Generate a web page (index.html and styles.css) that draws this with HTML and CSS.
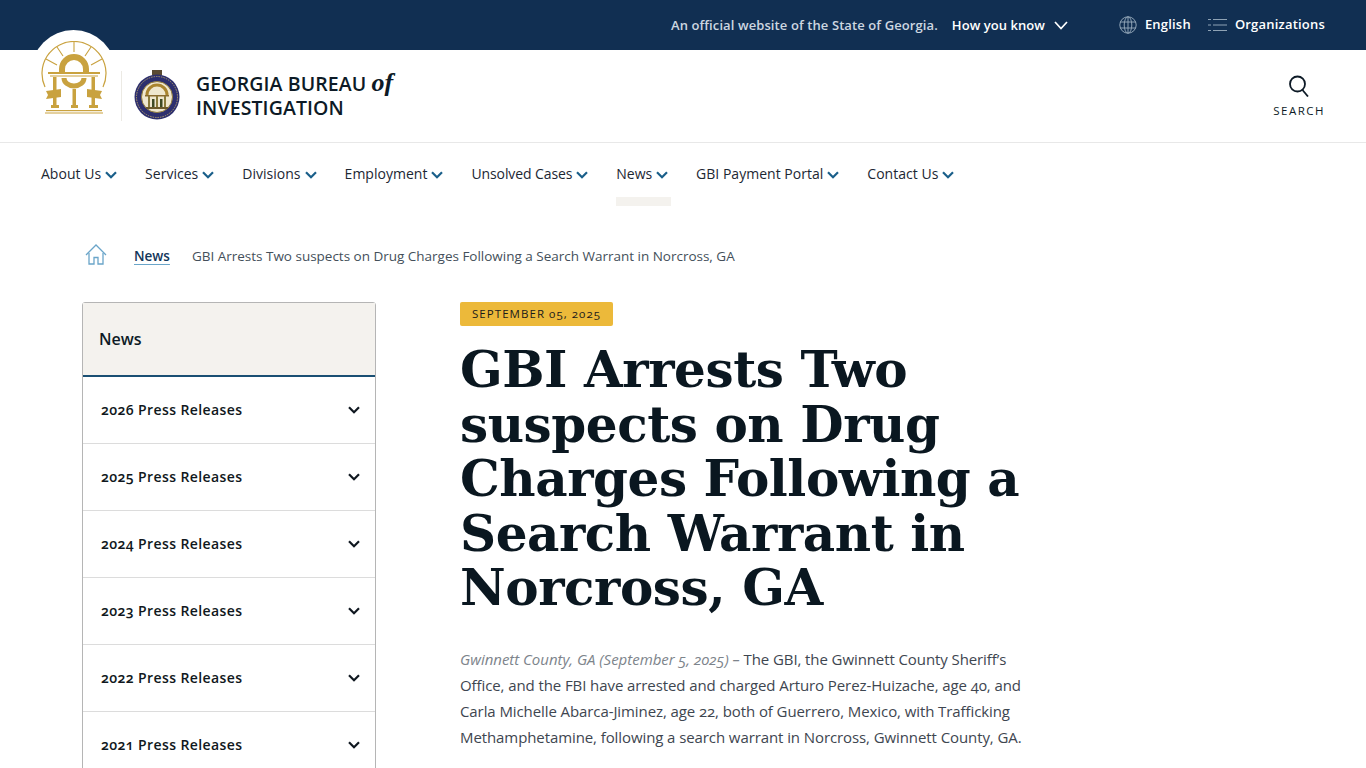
FILE: index.html
```html
<!DOCTYPE html>
<html lang="en">
<head>
<meta charset="utf-8">
<title>GBI Arrests Two suspects on Drug Charges Following a Search Warrant in Norcross, GA</title>
<link rel="stylesheet" href="styles.css">
</head>
<body>
<div class="topbar">
  <span class="official">An official website of the State of Georgia.</span>
  <span class="know">How you know</span>
  <svg class="know-chev" width="14" height="9" viewBox="0 0 14 9"><path d="M1 1l6 6.500L13 1" fill="none" stroke="#fff" stroke-width="1.700"/></svg>
  <svg class="globe" width="18" height="18" viewBox="0 0 18 18" fill="none" stroke="#8fa3b5" stroke-width="1"><circle cx="9" cy="9" r="8.200"/><ellipse cx="9" cy="9" rx="3.800" ry="8.200"/><path d="M9 .8v16.400M1 6h16M1 12h16"/></svg>
  <span class="tool">English</span>
  <svg class="orgs" width="19" height="14" viewBox="0 0 19 14" fill="none" stroke="#8fa3b5" stroke-width="1"><path d="M5 1.500h14M5 7h14M5 12.500h14M0 1.500h3M0 7h3M0 12.500h3"/></svg>
  <span class="tool">Organizations</span>
</div>

<header class="masthead">
  <a class="seal-tab" href="#" aria-label="Georgia">
    <svg width="66" height="74" viewBox="0 0 66 74">
      <g fill="none" stroke="#c9a23f">
        <path d="M4 46A32 32 0 1 1 62 46" stroke-width="1.200"/>
        <path d="M33 1v10M16 6l6 9M50 6l-6 9M5 18l11 6M61 18l-11 6" stroke-width="1.100"/>
        <path d="M21 31v-3a12 12 0 0 1 24 0v3" stroke-width="6"/>
        <path d="M23 37a10 8 0 0 0 20 0" stroke-width="5"/>
      </g>
      <g fill="#c9a23f">
        <rect x="7" y="31" width="52" height="2"/>
        <rect x="9" y="34.500" width="48" height="1"/>
        <rect x="12" y="36" width="3.500" height="28"/>
        <rect x="31.500" y="48" width="3.500" height="16"/>
        <rect x="50.500" y="36" width="3.500" height="28"/>
        <path d="M5 50l15-2v8l-15 2 2-4zM61 50l-15-2v8l15 2-2-4z"/>
        <rect x="10" y="64" width="8" height="3"/>
        <rect x="30" y="64" width="7" height="3"/>
        <rect x="48" y="64" width="9" height="3"/>
        <rect x="5" y="69" width="56" height="1.200"/>
        <rect x="4" y="71.500" width="58" height="1"/>
      </g>
    </svg>
  </a>
  <div class="brand">
    <svg class="gbi-seal" width="46" height="50" viewBox="0 0 46 50">
      <path d="M18 0h10v5H18z" fill="#5a4a32"/>
      <circle cx="23" cy="27" r="22.500" fill="#2d2f6e"/>
      <circle cx="23" cy="27" r="20.500" fill="none" stroke="#c9b36a" stroke-width=".8" stroke-dasharray="1.500 1"/>
      <circle cx="23" cy="27" r="15.500" fill="#efe7cf" stroke="#8f7a3c"/>
      <path d="M13 25a10 10 0 0 1 20 0" fill="none" stroke="#a9842f" stroke-width="3"/>
      <path d="M11 25h24v1.500H11z" fill="#8a6b2f"/>
      <path d="M14 26h2v11h-2zM22 26h2v11h-2zM30 26h2v11h-2z" fill="#8a7a3a"/>
      <path d="M18 29h2.500v8H18zM26 29h2.500v8H26z" fill="#3e4a25"/>
      <path d="M12 37h22v2H12z" fill="#6c5a2b"/>
    </svg>
    <div class="agency">GEORGIA BUREAU <em>of</em><br>INVESTIGATION</div>
  </div>
  <a class="search" href="#">
    <svg width="22" height="22" viewBox="0 0 22 22" fill="none" stroke="#0d1a26" stroke-width="1.800"><circle cx="9.500" cy="9" r="7.500"/><path d="M14.500 15l5.500 6.500"/></svg>
    <span>SEARCH</span>
  </a>
</header>

<nav class="mainnav">
  <a class="navitem" href="#"><span>About Us</span><svg class="nchev" viewBox="0 0 12 8"><path d="M1 1.200l5 5 5-5" /></svg></a>
  <a class="navitem" href="#"><span>Services</span><svg class="nchev" viewBox="0 0 12 8"><path d="M1 1.200l5 5 5-5" /></svg></a>
  <a class="navitem" href="#"><span>Divisions</span><svg class="nchev" viewBox="0 0 12 8"><path d="M1 1.200l5 5 5-5" /></svg></a>
  <a class="navitem" href="#"><span>Employment</span><svg class="nchev" viewBox="0 0 12 8"><path d="M1 1.200l5 5 5-5" /></svg></a>
  <a class="navitem tight" href="#"><span>Unsolved Cases</span><svg class="nchev" viewBox="0 0 12 8"><path d="M1 1.200l5 5 5-5" /></svg></a>
  <a class="navitem active" href="#"><span>News</span><svg class="nchev" viewBox="0 0 12 8"><path d="M1 1.200l5 5 5-5" /></svg></a>
  <a class="navitem" href="#"><span>GBI Payment Portal</span><svg class="nchev" viewBox="0 0 12 8"><path d="M1 1.200l5 5 5-5" /></svg></a>
  <a class="navitem" href="#"><span>Contact Us</span><svg class="nchev" viewBox="0 0 12 8"><path d="M1 1.200l5 5 5-5" /></svg></a>
</nav>

<div class="crumbs">
  <svg class="home" width="22" height="21" viewBox="0 0 22 21" fill="none" stroke="#6aa5c9" stroke-width="1.300"><path d="M1 11L11 1l10 10"/><path d="M4 9v11h5v-6.500h4V20h5V9"/></svg>
  <a class="crumb-link" href="#">News</a>
  <span class="crumb-current">GBI Arrests Two suspects on Drug Charges Following a Search Warrant in Norcross, GA</span>
</div>

<div class="content">
  <aside class="side">
    <div class="side-head">News</div>
    <div class="side-row"><span>2026 Press Releases</span><svg class="schev" viewBox="0 0 12 8"><path d="M1 1.200l5 5 5-5"/></svg></div>
    <div class="side-row"><span>2025 Press Releases</span><svg class="schev" viewBox="0 0 12 8"><path d="M1 1.200l5 5 5-5"/></svg></div>
    <div class="side-row"><span>2024 Press Releases</span><svg class="schev" viewBox="0 0 12 8"><path d="M1 1.200l5 5 5-5"/></svg></div>
    <div class="side-row"><span>2023 Press Releases</span><svg class="schev" viewBox="0 0 12 8"><path d="M1 1.200l5 5 5-5"/></svg></div>
    <div class="side-row"><span>2022 Press Releases</span><svg class="schev" viewBox="0 0 12 8"><path d="M1 1.200l5 5 5-5"/></svg></div>
    <div class="side-row"><span>2021 Press Releases</span><svg class="schev" viewBox="0 0 12 8"><path d="M1 1.200l5 5 5-5"/></svg></div>
  </aside>
  <main class="article">
    <div class="date">SEPTEMBER 05, 2025</div>
    <h1>GBI Arrests Two suspects on Drug Charges Following a Search Warrant in Norcross, GA</h1>
    <p><em>Gwinnett County, GA (September 5, 2025) –</em> The GBI, the Gwinnett County Sheriff’s Office, and the FBI have arrested and charged Arturo Perez-Huizache, age 40, and Carla Michelle Abarca-Jiminez, age 22, both of Guerrero, Mexico, with Trafficking Methamphetamine, following a search warrant in Norcross, Gwinnett County, GA.</p>
  </main>
</div>
</body>
</html>
```
FILE: styles.css
```css
* { box-sizing: border-box; }
html, body { margin: 0; height: 768px; overflow: hidden; background: #fff; }
body { font-family: "Open Sans", "Noto Sans", sans-serif; font-variant-numeric: oldstyle-nums; color: #0d1a26; position: relative; }
a { color: inherit; text-decoration: none; }

.topbar { height: 50px; background: #112f52; color: #fff; display: flex; align-items: center; justify-content: flex-end; padding-right: 41px; font-size: 13px; font-weight: 600; }
.official { color: #cdd7e1; letter-spacing: .1px; margin-right: 14px; }
.know { margin-right: 9px; letter-spacing: .05px; }
.know-chev { margin-right: 51px; }
.globe { margin-right: 8px; }
.tool { letter-spacing: .2px; position: relative; top: -1px; }
.orgs { margin: 0 8px 0 17px; }

.masthead { height: 93px; border-bottom: 1px solid #e8e8e8; display: flex; align-items: center; padding: 0 41px 0 121px; justify-content: space-between; }
.seal-tab { position: absolute; left: 31px; top: 30px; width: 85px; height: 85px; border-radius: 50%; background: #fff; display: flex; justify-content: center; padding-top: 11px; }
.brand { display: flex; align-items: center; height: 50px; border-left: 1px solid #eceae4; padding-left: 12px; gap: 16px; }
.gbi-seal { display: block; margin-top: -3px; }
.agency { font-size: 19.500px; line-height: 24px; font-weight: 600; color: #0d1a26; letter-spacing: .1px; }
.agency em { font-family: "Liberation Serif", serif; font-weight: 700; font-size: 26px; line-height: 20px; }
.search { display: flex; flex-direction: column; align-items: center; gap: 6px; font-size: 11.500px; letter-spacing: 1.500px; }
.search svg { display: block; }

.mainnav { height: 63px; display: flex; gap: 28px; padding-left: 41px; }
.navitem { height: 63px; display: flex; align-items: flex-start; padding-top: 22px; font-size: 14px; line-height: 18px; letter-spacing: .02px; gap: 4px; color: #1c2733; }
.navitem.tight { letter-spacing: -.1px; }
.navitem.active { border-bottom: 9px solid #f4f2ee; letter-spacing: -.05px; padding-right: 3px; margin-right: -3px; }
.nchev { width: 12px; height: 8px; margin-top: 6px; fill: none; stroke: #1a5f8a; stroke-width: 2.200; }

.crumbs { display: flex; align-items: center; padding-left: 85px; margin-top: 39px; height: 22px; font-size: 13.500px; }
.home { position: relative; top: -2px; }
.crumb-link { margin-left: 27px; font-weight: 600; color: #12365a; text-decoration: underline; text-decoration-color: #6aa5c9; text-underline-offset: 3px; }
.crumb-current { margin-left: 22px; color: #444f5a; letter-spacing: -.01px; }

.content { display: flex; padding-left: 82px; margin-top: 35px; }
.side { width: 294px; border: 1px solid #b5b5b5; border-radius: 3px 3px 0 0; flex: none; }
.side-head { height: 74px; background: #f4f2ee; border-bottom: 2px solid #1a4f73; padding: 26px 0 0 16px; font-size: 16px; line-height: 20px; font-weight: 600; color: #0d1a26; margin-bottom: 0; }
.side-row { height: 67px; border-bottom: 1px solid #dcdcdc; display: flex; justify-content: space-between; align-items: center; padding: 0 15px 0 18px; font-size: 14px; font-weight: 600; color: #101820; letter-spacing: .4px; }
.side-row span { position: relative; top: -1px; }
.schev { width: 12px; height: 8px; fill: none; stroke: #101820; stroke-width: 2.200; }

.article { width: 575px; margin-left: 84px; }
.date { width: fit-content; height: 24px; line-height: 23px; padding: 0 12px; background: #ecb93a; border-radius: 2px; font-size: 11.500px; letter-spacing: 1.050px; color: #1a1a1a; }
h1 { margin: 17px 0 0; font-family: "DejaVu Serif", serif; font-weight: 700; font-size: 50px; line-height: 54.600px; color: #0a1720; letter-spacing: -.45px; }
p { margin: 30px 0 0; font-size: 15px; line-height: 26px; color: #3e4650; letter-spacing: -.09px; }
p em { color: #7d848b; letter-spacing: -.02px; }
```
